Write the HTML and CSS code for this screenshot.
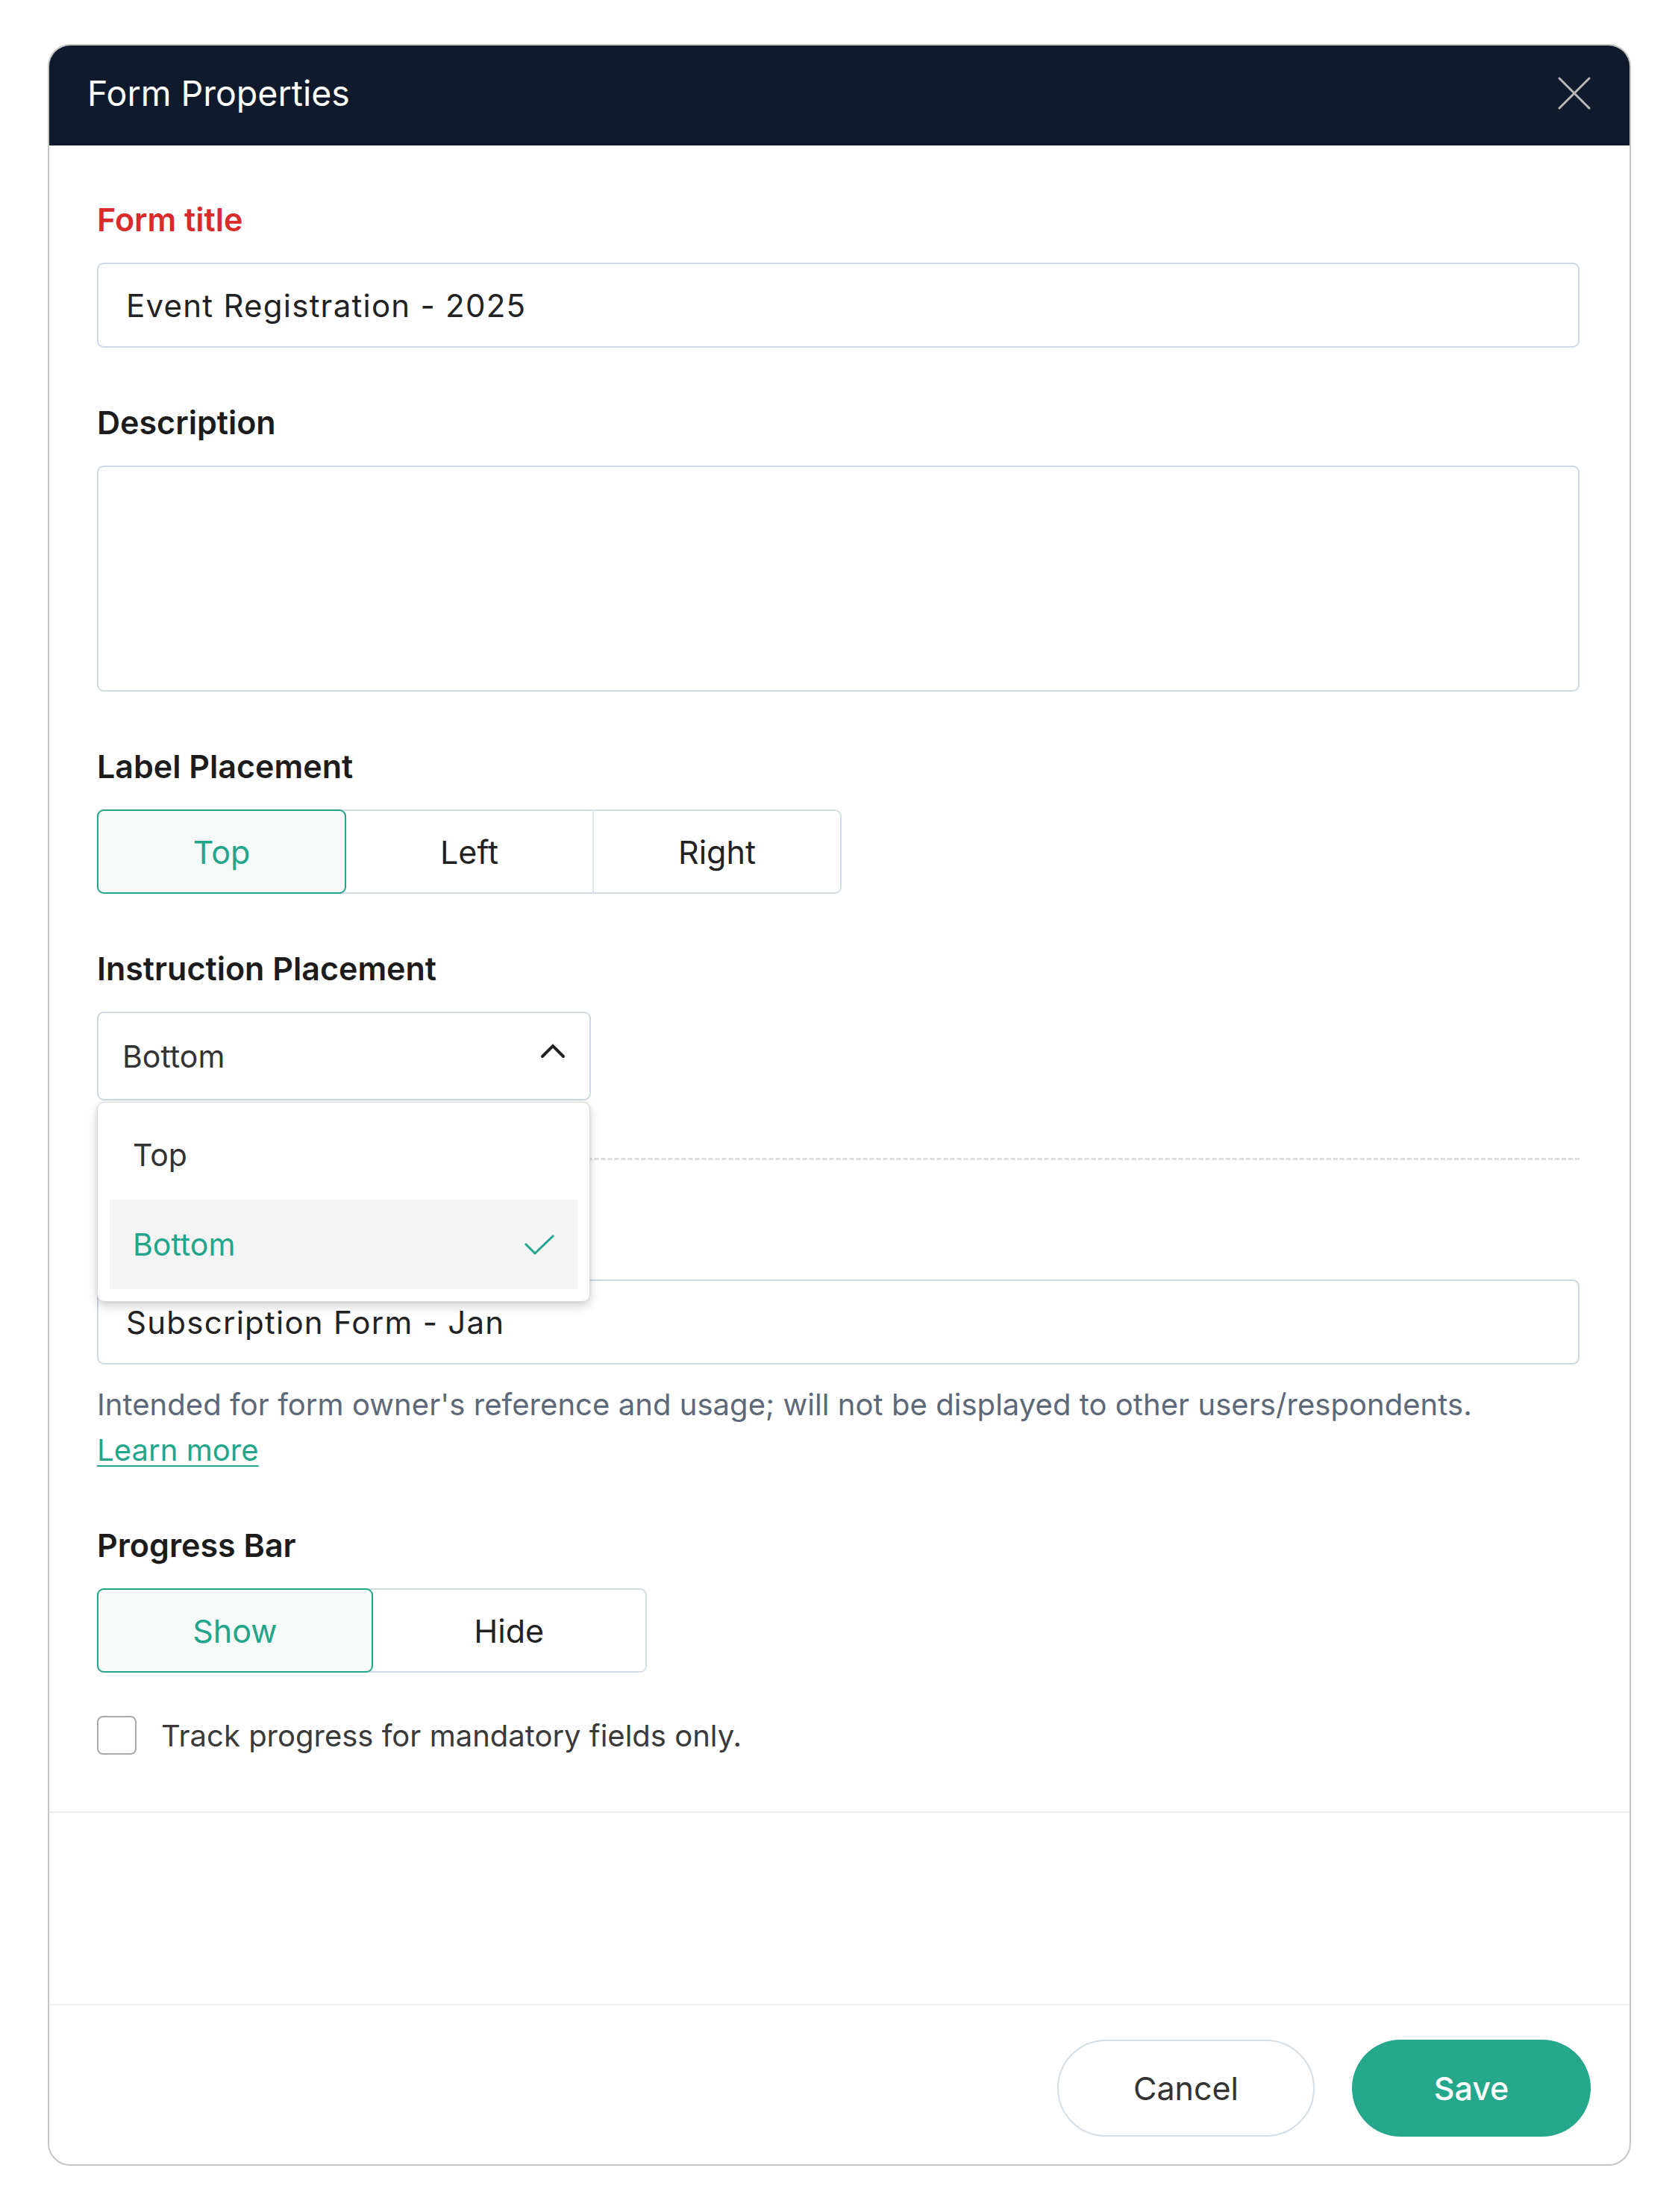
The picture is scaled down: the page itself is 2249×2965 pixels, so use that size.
FILE: index.html
```html
<!DOCTYPE html>
<html lang="en">
<head>
<meta charset="utf-8">
<title>Form Properties</title>
<link rel="stylesheet" href="styles.css">
</head>
<body>
<div class="modal">
  <div class="modal-header">
    <h1 class="modal-title">Form Properties</h1>
    <button class="close-btn" aria-label="Close">
      <svg width="44" height="44" viewBox="0 0 44 44"><path d="M2 2 L42 42 M42 2 L2 42" stroke="#b9b9b9" stroke-width="3" stroke-linecap="round" fill="none"/></svg>
    </button>
  </div>
  <div class="modal-body">
    <div class="field">
      <div class="label label-required">Form title</div>
      <div class="input">Event Registration - 2025</div>
    </div>
    <div class="field">
      <div class="label">Description</div>
      <div class="textarea"></div>
    </div>
    <div class="field">
      <div class="label">Label Placement</div>
      <div class="segmented seg-three">
        <div class="seg seg-active">Top</div>
        <div class="seg">Left</div>
        <div class="seg">Right</div>
      </div>
    </div>
    <div class="field field-select">
      <div class="label">Instruction Placement</div>
      <div class="select-wrap">
        <div class="select">
          <span>Bottom</span>
          <svg class="chevron" width="34" height="20" viewBox="0 0 34 20"><path d="M3 17 L17 3 L31 17" stroke="#222" stroke-width="4" fill="none" stroke-linecap="round" stroke-linejoin="miter"/></svg>
        </div>
        <ul class="dropdown">
          <li class="dd-item">Top</li>
          <li class="dd-item dd-selected"><span>Bottom</span>
            <svg width="42" height="30" viewBox="0 0 42 30"><path d="M2 14 L15 27 L40 3" stroke="#23a58a" stroke-width="3" fill="none"/></svg>
          </li>
        </ul>
      </div>
    </div>
    <div class="dashed"></div>
    <div class="field field-internal">
      <div class="label-space" aria-hidden="true"></div>
      <div class="input">Subscription Form - Jan</div>
      <p class="help">Intended for form owner's reference and usage; will not be displayed to other users/respondents.<br><a href="#" class="link">Learn more</a></p>
    </div>
    <div class="field field-progress">
      <div class="label">Progress Bar</div>
      <div class="segmented seg-two">
        <div class="seg seg-active">Show</div>
        <div class="seg">Hide</div>
      </div>
    </div>
    <label class="check-row">
      <span class="checkbox"></span>
      <span class="check-text">Track progress for mandatory fields only.</span>
    </label>
  </div>
  <div class="modal-spacer"></div>
  <div class="modal-footer">
    <button class="btn btn-cancel">Cancel</button>
    <button class="btn btn-save">Save</button>
  </div>
</div>
</body>
</html>
```
FILE: styles.css
```css
* { box-sizing: border-box; }

html, body {
  margin: 0;
  padding: 0;
  background: #ffffff;
}

body {
  font-family: "Inter", "Noto Sans", sans-serif;
  color: #222222;
}

.modal {
  margin: 59px 0 0 64px;
  width: 2122px;
  border: 2px solid #c6c6c6;
  border-radius: 30px;
  background: #ffffff;
}

.modal-header {
  height: 134px;
  background: #0f1b2d;
  border-radius: 28px 28px 0 0;
  display: flex;
  align-items: center;
  justify-content: space-between;
  padding: 0 52px 0 51px;
}

.modal-title {
  margin: 0;
  font-size: 46.5px;
  font-weight: 400;
  color: #ffffff;
  line-height: 1;
  padding-bottom: 6px;
}

.close-btn {
  background: none;
  border: 0;
  padding: 0;
  width: 44px;
  height: 44px;
  display: flex;
  margin-bottom: 6px;
}

.modal-body {
  padding: 74px 67px 76px 64px;
  border-bottom: 2px solid #ececec;
}

.field {
  margin-bottom: 75px;
}

.label {
  font-size: 43px;
  line-height: 50px;
  font-weight: 600;
  color: #1c1c1c;
  margin-bottom: 33px;
}

.label-space {
  height: 50px;
  margin-bottom: 33px;
}

.label-required {
  color: #d92b2b;
}

.input {
  height: 114px;
  border: 2px solid #cfd8e3;
  border-radius: 9px;
  display: flex;
  align-items: center;
  padding: 0 38px 0 37px;
  font-size: 42px;
  letter-spacing: 1.25px;
  color: #222222;
}

.textarea {
  height: 303px;
  border: 2px solid #cfd8e3;
  border-radius: 9px;
}

.segmented {
  display: flex;
  height: 113px;
  border: 2px solid #d3dbe5;
  border-radius: 9px;
}

.seg-three { width: 998px; }
.seg-two { width: 737px; }

.seg {
  flex: 1;
  display: flex;
  align-items: center;
  justify-content: center;
  font-size: 43px;
  color: #222222;
  margin: -2px 0;
}

.seg + .seg {
  border-left: 2px solid #dde3ea;
}

.seg-active {
  border: 2px solid #23a58a;
  border-radius: 9px;
  background: #f5f9f8;
  color: #23a58a;
  margin: -2px 0 -2px -2px;
}

.seg-active + .seg {
  border-left: 0;
}

.field-select {
  margin-bottom: 77px;
}

.select-wrap {
  position: relative;
  width: 662px;
}

.select {
  height: 119px;
  border: 2px solid #cfd8e3;
  border-radius: 9px;
  display: flex;
  align-items: center;
  justify-content: space-between;
  padding: 0 32px 0 32px;
  font-size: 41px;
  color: #333333;
}

.chevron {
  margin-bottom: 14px;
}

.dropdown {
  position: absolute;
  top: calc(100% + 2px);
  left: 0;
  width: 661px;
  margin: 0;
  padding: 10px 16px 16px;
  list-style: none;
  background: #ffffff;
  border: 1px solid #dadada;
  border-radius: 10px;
  box-shadow: 0 6px 14px rgba(0, 0, 0, 0.18), 0 0 4px rgba(0, 0, 0, 0.08);
  z-index: 10;
}

.dd-item {
  height: 120px;
  display: flex;
  align-items: center;
  justify-content: space-between;
  padding: 0 30px 0 31px;
  font-size: 41px;
  color: #333333;
}

.dd-selected {
  background: #f4f4f4;
  color: #23a58a;
}

.dashed {
  border-top: 3px dashed #dddddd;
  margin-bottom: 77px;
}

.field-internal {
  margin-bottom: 72px;
}

.help {
  margin: 23px 0 0;
  font-size: 40px;
  line-height: 61px;
  letter-spacing: 0.05px;
  color: #5d6878;
}

.link {
  color: #23a58a;
  text-decoration: underline;
  text-decoration-thickness: 2px;
  text-underline-offset: 6px;
}

.field-progress {
  margin-bottom: 58px;
}

.check-row {
  display: flex;
  align-items: center;
  gap: 33px;
  height: 52px;
}

.checkbox {
  width: 53px;
  height: 52px;
  border: 2px solid #aaaaaa;
  border-radius: 8px;
  background: #ffffff;
  flex: none;
}

.check-text {
  font-size: 40px;
  color: #3a3a3a;
}

.modal-spacer {
  height: 256px;
}

.modal-footer {
  border-top: 2px solid #f0f0f0;
  display: flex;
  justify-content: flex-end;
  gap: 50px;
  padding: 46px 52px 37px;
}

.btn {
  font-family: inherit;
  height: 130px;
  border-radius: 65px;
  font-size: 43px;
  cursor: pointer;
}

.btn-cancel {
  width: 345px;
  background: #ffffff;
  border: 2px solid #d5dde5;
  color: #333333;
}

.btn-save {
  width: 320px;
  background: #25a78b;
  border: 0;
  color: #ffffff;
  font-weight: 500;
}
```
